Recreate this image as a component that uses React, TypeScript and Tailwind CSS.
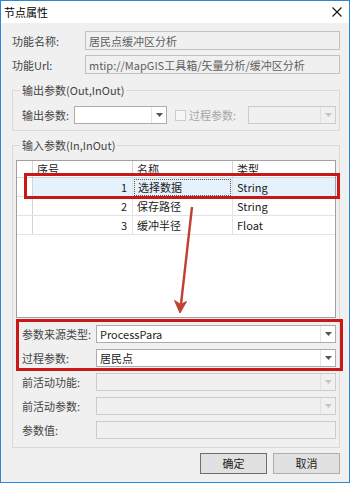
import React from 'react';

interface ComboProps {
  value?: string;
  className: string;
  disabled?: boolean;
}

function DropArrow({ disabled }: { disabled?: boolean }) {
  return (
    <svg width="7" height="4" viewBox="0 0 7 4">
      <path d="M0 0h7L3.5 4z" fill={disabled ? '#c4c4c4' : '#555555'} />
    </svg>
  );
}

function Combo({ value, className, disabled }: ComboProps) {
  return (
    <div
      className={`flex h-[18px] border ${
        disabled ? 'border-[#cccccc] bg-[#f0f0f0]' : 'border-[#acacac] bg-white'
      } ${className}`}
    >
      <div className="flex-1 flex items-center pl-[3px] text-[#222] leading-none whitespace-nowrap">{value}</div>
      <div
        className={`w-[15px] flex items-center justify-center border-l ${
          disabled ? 'border-[#e0e0e0]' : 'border-[#e6e6e6]'
        }`}
      >
        <DropArrow disabled={disabled} />
      </div>
    </div>
  );
}

function ReadBox({ value }: { value: string }) {
  return (
    <div className="flex-1 h-[19px] flex items-center pl-[3px] border border-[#c2c2c2] bg-[#f0f0f0] text-[#5f5f5f] whitespace-nowrap">
      {value}
    </div>
  );
}

const rows = [
  { no: 1, name: '选择数据', type: 'String', selected: true },
  { no: 2, name: '保存路径', type: 'String', selected: false },
  { no: 3, name: '缓冲半径', type: 'Float', selected: false },
];

const paramRows = [
  { label: '参数来源类型:', value: 'ProcessPara', disabled: false },
  { label: '过程参数:', value: '居民点', disabled: false },
  { label: '前活动功能:', value: '', disabled: true },
  { label: '前活动参数:', value: '', disabled: true },
];

export default function App() {
  return (
    <div className="relative w-[350px] h-[483px] overflow-hidden font-['Noto_Sans_CJK_SC',sans-serif] text-[11px] leading-[16px] text-[#444]">
      <div className="w-full h-full border border-[#2b88d8] bg-[#f0f0f0]">
        {/* title bar */}
        <div className="h-[22px] bg-white flex items-center justify-between pl-[3px] pr-[7px]">
          <span className="text-black">节点属性</span>
          <svg width="10" height="10" viewBox="0 0 10 10">
            <path d="M0.5 0.5L9.5 9.5M9.5 0.5L0.5 9.5" stroke="#111" strokeWidth="1.1" />
          </svg>
        </div>

        <div className="pl-[11px] pr-[9px]">
          <div className="flex items-center mt-[8px]">
            <span className="w-[73px] shrink-0 whitespace-nowrap">功能名称:</span>
            <ReadBox value="居民点缓冲区分析" />
          </div>
          <div className="flex items-center mt-[5px]">
            <span className="w-[73px] shrink-0 whitespace-nowrap">功能Url:</span>
            <ReadBox value="mtip://MapGIS工具箱/矢量分析/缓冲区分析" />
          </div>

          {/* output params */}
          <fieldset className="w-[328px] mt-[8px] border border-[#d9d9d9] pb-[6px]">
            <legend className="ml-[7px] px-[2px] leading-[16px]">输出参数(Out,InOut)</legend>
            <div className="flex items-center mt-[8px] pl-[9px]">
              <span className="w-[52px] shrink-0 whitespace-nowrap">输出参数:</span>
              <Combo className="w-[93px] shrink-0" />
              <div className="ml-[8px] shrink-0 w-[11px] h-[11px] border border-[#cccccc] bg-[#f7f7f7]" />
              <span className="ml-[3px] w-[59px] shrink-0 whitespace-nowrap text-[#a6a6a6]">过程参数:</span>
              <Combo className="w-[88px] shrink-0" disabled />
            </div>
          </fieldset>

          {/* input params */}
          <fieldset className="w-[328px] mt-[6px] border border-[#d9d9d9] pb-[8px]">
            <legend className="ml-[7px] px-[2px] leading-[16px]">输入参数(In,InOut)</legend>
            <div className="ml-[3px] mt-[7px] w-[320px] h-[158px] border border-[#a0a0a0] bg-white text-[#222]">
              <div className="grid grid-cols-[16px_100px_100px_1fr] h-[17px] border-b border-[#d5d5d5]">
                <div className="border-r border-[#d5d5d5]" />
                <div className="border-r border-[#d5d5d5] pl-[4px] leading-[16px]">序号</div>
                <div className="border-r border-[#d5d5d5] pl-[4px] leading-[16px]">名称</div>
                <div className="pl-[4px] leading-[16px]">类型</div>
              </div>
              {rows.map((r) => (
                <div
                  key={r.no}
                  className="grid grid-cols-[16px_100px_100px_1fr] h-[19px] border-b border-[#e3e3e3]"
                >
                  <div className="border-r border-[#d5d5d5]" />
                  <div
                    className={`border-r border-[#e3e3e3] pr-[5px] text-right leading-[18px] ${
                      r.selected ? 'bg-[#e5f1fb]' : ''
                    }`}
                  >
                    {r.no}
                  </div>
                  <div className={`border-r border-[#e3e3e3] ${r.selected ? 'bg-[#e5f1fb] p-px' : ''}`}>
                    <div
                      className={`h-full ${
                        r.selected
                          ? 'pl-[3px] leading-[15px] border border-dotted border-[#555]'
                          : 'pl-[4px] leading-[18px]'
                      }`}
                    >
                      {r.name}
                    </div>
                  </div>
                  <div className={`pl-[4px] leading-[18px] ${r.selected ? 'bg-[#e5f1fb]' : ''}`}>
                    {r.type}
                  </div>
                </div>
              ))}
            </div>

            <div className="flex flex-col gap-[6px] mt-[7px] pl-[9px] pr-[3px]">
              {paramRows.map((p) => (
                <div key={p.label} className="flex items-center">
                  <span className="w-[74px] shrink-0 whitespace-nowrap">{p.label}</span>
                  <Combo className="flex-1" value={p.value} disabled={p.disabled} />
                </div>
              ))}
              <div className="flex items-center">
                <span className="w-[74px] shrink-0 whitespace-nowrap">参数值:</span>
                <div className="flex-1 h-[18px] border border-[#cccccc] bg-[#f0f0f0]" />
              </div>
            </div>
          </fieldset>

          <div className="flex justify-end gap-[6px] mt-[5px]">
            <button className="w-[67px] h-[21px] border border-[#6e6e6e] bg-[#e1e1e1] text-[#222] leading-none">
              确定
            </button>
            <button className="w-[67px] h-[21px] border border-[#adadad] bg-[#e1e1e1] text-[#222] leading-none">
              取消
            </button>
          </div>
        </div>
      </div>

      {/* annotation overlays */}
      <div className="absolute left-[24px] top-[173px] w-[316px] h-[26px] border-[3px] border-[#c81818]" />
      <div className="absolute left-[16px] top-[319px] w-[327px] h-[52px] border-[3px] border-[#c81818]" />
      <svg className="absolute left-0 top-0 pointer-events-none" width="350" height="483" viewBox="0 0 350 483">
        <line x1="192" y1="207" x2="181" y2="304" stroke="#c0412e" strokeWidth="2.4" />
        <path d="M174.5 300.5 L180 313 L186.5 301.5 L180.8 304.5 Z" fill="#c0412e" stroke="#c0412e" strokeWidth="1" strokeLinejoin="round" />
      </svg>
    </div>
  );
}
